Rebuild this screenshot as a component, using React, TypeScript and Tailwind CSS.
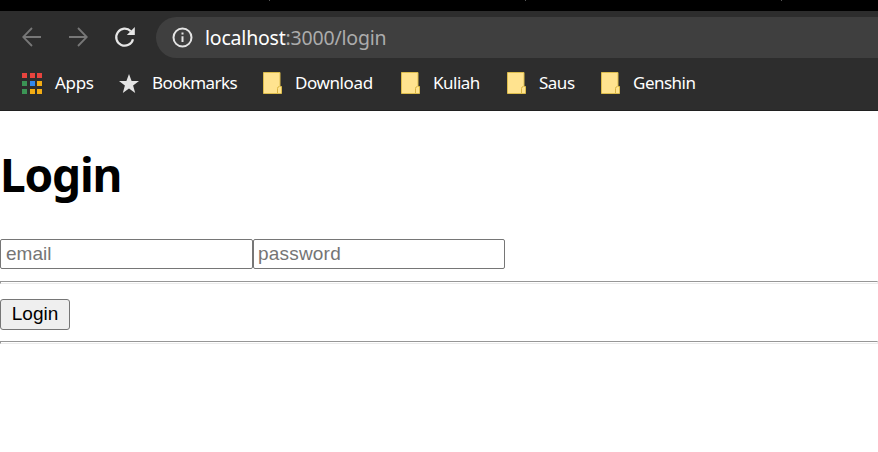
import React from "react";

const ui = "font-['Noto_Sans','Open_Sans',sans-serif]";

function Folder() {
  return (
    <svg className="block h-[22px] w-[20px] shrink-0" viewBox="0 0 20 22">
      <path d="M0.5 0.5H17V14.5H18.5V21.5H0.5Z" fill="#ffe38f" stroke="#dcbc4c" />
      <path d="M14.5 21V16.5Q14.5 14.5 16.5 14.5" fill="none" stroke="#d9b440" />
    </svg>
  );
}

function AppsGrid() {
  const colors = ["#e8443e", "#e8443e", "#e8443e", "#3b9455", "#3187ed", "#f2ac14", "#3b9455", "#f2ac14", "#f2ac14"];
  return (
    <div className="grid w-5 shrink-0 grid-cols-3 gap-x-[2.5px] gap-y-[3px]">
      {colors.map((color, i) => (
        <span key={i} className="h-[5px]" style={{ backgroundColor: color }} />
      ))}
    </div>
  );
}

function Star() {
  return (
    <svg className="mt-px block h-5 w-5 shrink-0" viewBox="0 0 20 20" fill="#e4e4e4">
      <path d="M10 0L12.6 7H20L14.1 11.5L16.2 19L10 14.5L3.8 19L5.9 11.5L0 7H7.4Z" />
    </svg>
  );
}

function Arrow({ className }: { className: string }) {
  return (
    <svg className={className} viewBox="0 0 20 20" fill="none" stroke="#777" strokeWidth="1.8">
      <path d="M19 10H1.5M10 1L1.2 10L10 19" />
    </svg>
  );
}

function Rule() {
  return <hr className="h-[3px] border border-[#ececec] border-t-[#979797] border-l-[#979797]" />;
}

export default function App() {
  return (
    <div className="h-[452px] w-full overflow-hidden bg-white text-black">
      <header className={`${ui} text-white`}>
        <div className="flex h-[11px] bg-black pl-[269px]">
          <span className="h-px w-px bg-[#555]" />
          <span className="ml-[255px] h-px w-px bg-[#555]" />
          <span className="ml-[255px] h-px w-px bg-[#555]" />
        </div>
        <div className="h-[100px] border-b border-[#202020] bg-[#2d2d2d] pt-[6px]">
          <div className="flex h-[41px] items-center pl-[22px]">
            <Arrow className="mb-[2px] h-5 w-5 shrink-0" />
            <Arrow className="mb-[2px] ml-[26px] h-5 w-5 shrink-0 rotate-180" />
            <svg className="mb-[2px] ml-[26px] h-[22px] w-[22px] shrink-0" viewBox="0 0 22 22">
              <path d="M19 13.2A8.5 8.5 0 1 1 16.8 5.2" fill="none" stroke="#e6e6e6" strokeWidth="2.2" />
              <path d="M20.8 1V9H12.8Z" fill="#e6e6e6" />
            </svg>
            <div className="ml-5 flex h-full flex-1 items-center rounded-l-full bg-[#3f3f3f] pl-4">
              <svg className="h-[21px] w-[21px] shrink-0" viewBox="0 0 21 21">
                <circle cx="10.5" cy="10.5" r="9" fill="none" stroke="#e4e4e4" strokeWidth="2" />
                <path d="M10.5 9.3V15M10.5 5.6V7.6" stroke="#e4e4e4" strokeWidth="2" />
              </svg>
              <span className="ml-3 text-[19.5px] leading-6 tracking-[-0.2px] whitespace-nowrap text-[#acacac]">
                <span className="text-white">localhost</span>:3000/login
              </span>
            </div>
          </div>
          <nav className="flex h-[50px] items-center pl-[22px] text-[17px] leading-6 tracking-[-0.5px] whitespace-nowrap">
            <div className="flex w-[97px] items-center gap-[13px]"><AppsGrid /><span className="tracking-[-0.3px]">Apps</span></div>
            <div className="flex w-[144px] items-center gap-[13px]"><Star /><span className="tracking-[-0.6px]">Bookmarks</span></div>
            <div className="flex w-[138px] items-center gap-3"><Folder /><span className="tracking-[-0.4px]">Download</span></div>
            <div className="flex w-[106px] items-center gap-3"><Folder /><span>Kuliah</span></div>
            <div className="flex w-[94px] items-center gap-3"><Folder /><span>Saus</span></div>
            <div className="flex items-center gap-3"><Folder /><span>Genshin</span></div>
          </nav>
        </div>
      </header>
      <main className="pt-[31px]">
        <h1 className={`${ui} h-[97px] text-[46px] leading-[64px] font-bold tracking-[-1.2px]`}>Login</h1>
        <form className="font-['Liberation_Sans',Arial,sans-serif] text-[19px]" onSubmit={(e) => e.preventDefault()}>
          <div className="flex">
            <input className="h-[30px] w-[253px] rounded-[2px] border border-[#767676] px-[5px] placeholder:text-[#757575]" placeholder="email" />
            <input type="password" className="h-[30px] w-[252px] rounded-[2px] border border-[#767676] px-1 tracking-[0.2px] placeholder:text-[#757575]" placeholder="password" />
          </div>
          <div className="mt-3"><Rule /></div>
          <button className="mt-[15px] block h-[31px] w-[70px] rounded-[3px] border border-[#767676] bg-[#efefef] pb-px leading-7">Login</button>
          <div className="mt-[11px]"><Rule /></div>
        </form>
      </main>
    </div>
  );
}
